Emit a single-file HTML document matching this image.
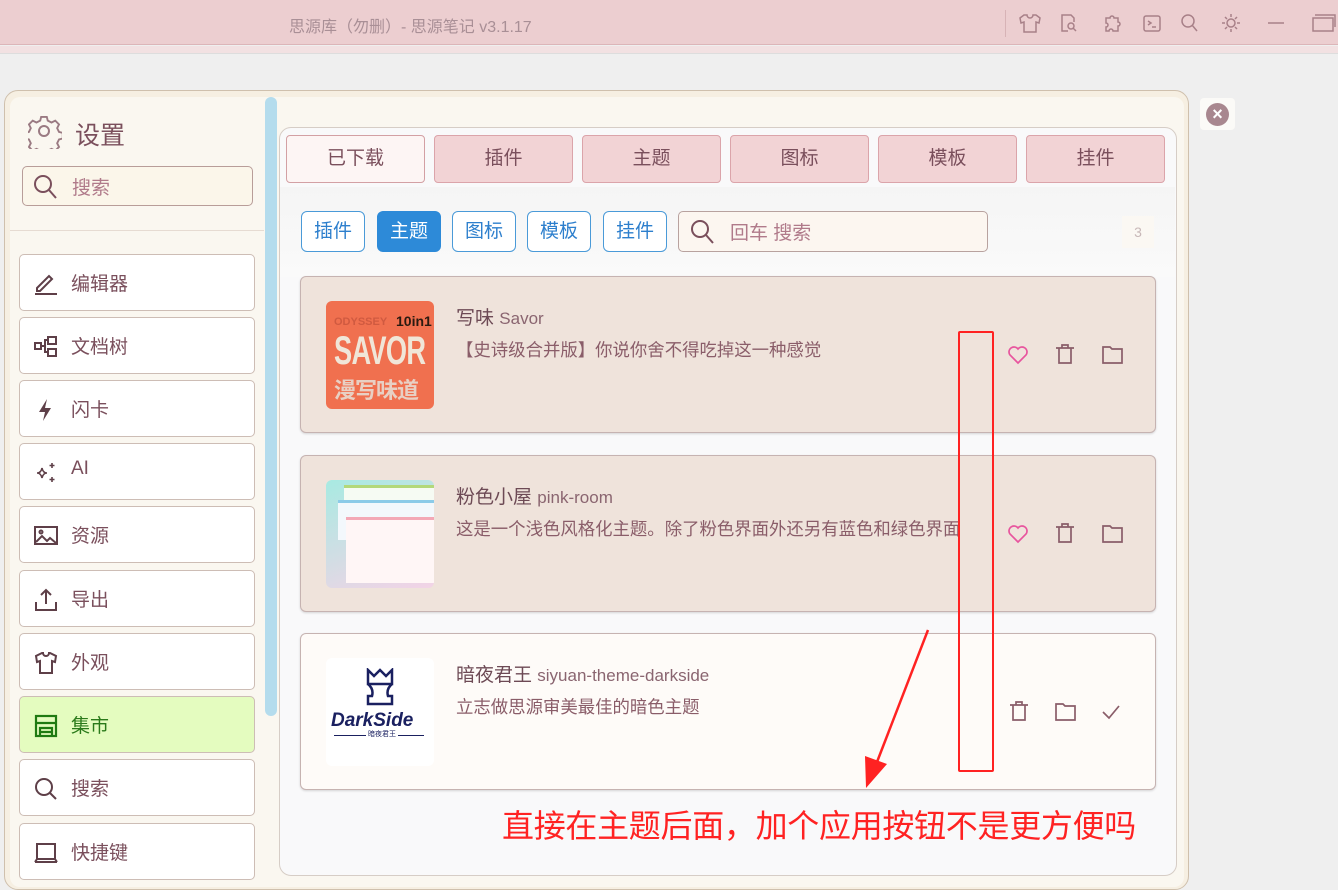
<!DOCTYPE html>
<html><head><meta charset="utf-8"><style>
*{box-sizing:border-box;margin:0;padding:0}
body{width:1338px;height:880px;overflow:hidden;background:#efefef;font-family:"Liberation Sans","Noto Sans CJK SC",sans-serif;position:relative}
.a{position:absolute}
.tb{left:0;top:0;width:1338px;height:45px;background:#ecced0;border-bottom:1px solid #dcb5b8}
.strip{left:0;top:46px;width:1338px;height:8px;background:#f2e1e2;border-bottom:1px solid #ddd}
.dlg{left:4px;top:90px;width:1185px;height:800px;background:#f6efe2;border:1px solid #cfc0ad;border-radius:14px}
.dlgi{left:10px;top:97px;width:1174px;height:790px;background:#faf7f0;border-radius:10px}
.mi{position:absolute;left:19px;width:236px;height:57px;background:#fff;border:1px solid #cdbdb5;border-radius:5px;font-size:19px;color:#7a4f5c}
.mi span{position:absolute;left:51px;top:14px}
.mi svg{position:absolute;left:14px;top:17px}
.tab{position:absolute;top:135px;width:139px;height:48px;background:#f2d3d5;border:1px solid #dba4aa;border-radius:4px;font-size:19px;color:#7a4f5c;text-align:center;line-height:46px}
.pill{position:absolute;top:211px;height:41px;border:1px solid #4a9ad8;border-radius:6px;font-size:19px;color:#2d7fcd;text-align:center;line-height:39px;background:#fff}
.card{position:absolute;left:300px;width:856px;height:157px;border:1px solid #c6b3b1;border-radius:6px;background:#efe3db;box-shadow:0 1px 2px rgba(0,0,0,.15)}
.card .t{position:absolute;left:155px;top:26px;font-size:19px;color:#6d4a55}
.card .t small{font-size:17px;color:#8a6570}
.card .d{position:absolute;left:155px;top:60px;font-size:17.4px;color:#8a5d69}
.img{position:absolute;left:25px;top:24px;width:108px;height:108px;border-radius:6px;overflow:hidden}
</style></head><body>
<div class="a tb"></div>
<div class="a" style="left:289px;top:13px;font-size:16px;color:#a98f96">思源库（勿删）- 思源笔记 v3.1.17</div>
<div class="a" style="left:1005px;top:10px;width:1px;height:27px;background:#d7b3b6"></div>
<svg class="a" style="left:1018px;top:12px" width="320" height="22" fill="none" stroke="#a88088" stroke-width="1.5">
<path d="M6 3l-4 3 1 5 3-1v10h12V10l3 1 1-5-4-3h-3a3 3 0 0 1-6 0z"/>
<path d="M48 3h-4v16h6M48 3h5l3 3v4"/><circle cx="53" cy="14" r="3"/><path d="M55 16l3 3"/>
<path d="M88 6h4a2 2 0 0 1 4 0h4v4a2 2 0 0 1 0 4v5h-5a2 2 0 0 0-4 0h-3v-4a2 2 0 0 0 0-4z"/>
<rect x="126" y="4" width="16" height="15" rx="2"/><path d="M130 9l3 2-3 2M134 15h4"/>
<circle cx="170" cy="9" r="6"/><path d="M174 13l5 6"/>
<circle cx="213" cy="11" r="4"/><path d="M213 2v3M213 17v3M204 11h3M219 11h3M207 5l2 2M217 15l2 2M219 5l-2 2M209 15l-2 2"/>
<path d="M250 11h16"/><rect x="295" y="6" width="20" height="13"/><path d="M297 3h20v12"/>
</svg>
<div class="a strip"></div>
<div class="a dlg"></div>
<div class="a dlgi"></div>
<svg class="a" style="left:28px;top:115px" width="34" height="34" fill="none" stroke="#9a7a82" stroke-width="2"><path d="M14 2h6l1 4 4 2 4-2 4 4-2 4 2 4 4 1v6l-4 1-2 4 2 4-4 4-4-2-4 2-1 4h-6l-1-4-4-2-4 2-4-4 2-4-2-4-4-1v-6l4-1 2-4-2-4 4-4 4 2 4-2z" transform="scale(.94)"/><circle cx="16" cy="16" r="5"/></svg>
<div class="a" style="left:75px;top:116px;font-size:25px;color:#7a4f5c">设置</div>
<div class="a" style="left:22px;top:166px;width:231px;height:40px;border:1px solid #b89d99;border-radius:5px;background:#fbf6ea"></div>
<svg class="a" style="left:33px;top:174px" width="26" height="26" fill="none" stroke="#7a4f5c" stroke-width="2"><circle cx="10" cy="10" r="8"/><path d="M16 16l7 8"/></svg>
<div class="a" style="left:72px;top:173px;font-size:19px;color:#b07a8a">搜索</div>
<div class="a" style="left:10px;top:230px;width:254px;height:1px;background:#e6dbd2"></div>
<div class="mi" style="top:254px"><svg width="24" height="24" fill="none" stroke="#5e3f48" stroke-width="2"><path d="M3 16L15 4l3 3L6 19H3zM1 22h22"/></svg><span>编辑器</span></div>
<div class="mi" style="top:317px"><svg width="24" height="24" fill="none" stroke="#5e3f48" stroke-width="2"><rect x="1" y="8" width="6" height="6"/><rect x="14" y="2" width="8" height="7"/><rect x="14" y="14" width="8" height="7"/><path d="M7 11h4V5h3M11 11v6h3"/></svg><span>文档树</span></div>
<div class="mi" style="top:380px"><svg width="24" height="24" fill="#5e3f48"><path d="M13 1L5 14h6l-2 9 8-13h-6z"/></svg><span>闪卡</span></div>
<div class="mi" style="top:443px"><svg width="24" height="24" fill="none" stroke="#5e3f48" stroke-width="1.6"><path d="M8 7q1 5 5 5-4 0-5 5-1-5-5-5 4 0 5-5z"/><path d="M18 2v5M15.5 4.5h5M18 16v5M15.5 18.5h5"/></svg><span>AI</span></div>
<div class="mi" style="top:506px"><svg width="24" height="24" fill="none" stroke="#5e3f48" stroke-width="2"><rect x="1" y="3" width="22" height="17"/><path d="M2 18l6-6 5 5 3-3 6 5"/><circle cx="7" cy="8" r="1.5"/></svg><span>资源</span></div>
<div class="mi" style="top:570px"><svg width="24" height="24" fill="none" stroke="#5e3f48" stroke-width="2"><path d="M2 14v8h20v-8M12 2v14M7 7l5-5 5 5"/></svg><span>导出</span></div>
<div class="mi" style="top:633px"><svg width="24" height="24" fill="none" stroke="#5e3f48" stroke-width="2"><path d="M8 2L2 5l1 6 3-1v12h12V10l3 1 1-6-6-3h-1a3 3 0 0 1-6 0z"/></svg><span>外观</span></div>
<div class="mi" style="top:696px;background:#e4fcbf"><svg width="24" height="24" fill="none" stroke="#1f7a12" stroke-width="2.2"><rect x="2" y="2" width="20" height="20"/><path d="M2 9h20M6 22v-8h12v8M6 14v4h12"/></svg><span style="color:#2a7a1a">集市</span></div>
<div class="mi" style="top:759px"><svg width="24" height="24" fill="none" stroke="#5e3f48" stroke-width="2"><circle cx="10" cy="10" r="8"/><path d="M16 16l6 6"/></svg><span>搜索</span></div>
<div class="mi" style="top:823px"><svg width="24" height="24" fill="none" stroke="#5e3f48" stroke-width="2"><rect x="3" y="3" width="18" height="15"/><path d="M1 21h22M3 18l-2 3M21 18l2 3"/></svg><span>快捷键</span></div>
<div class="a" style="left:265px;top:97px;width:12px;height:619px;background:#b4dced;border-radius:6px"></div>
<div class="a" style="left:1200px;top:98px;width:35px;height:32px;background:#fbfaf7;border-radius:4px"></div>
<div class="a" style="left:1206px;top:103px;width:23px;height:23px;border-radius:50%;background:#a8878f;color:#fff;font-size:18px;text-align:center;line-height:22px;font-weight:bold">×</div>
<div class="a" style="left:279px;top:127px;width:898px;height:749px;background:#f9f9fa;border:1px solid #d6cdc6;border-radius:12px"></div>
<div class="a" style="left:280px;top:187px;width:895px;height:90px;background:linear-gradient(#f5f5f5,#fafafa)"></div>
<div class="tab" style="left:286px;background:#fdf5f4;border-color:#d3a0a4">已下载</div>
<div class="tab" style="left:434px">插件</div>
<div class="tab" style="left:582px">主题</div>
<div class="tab" style="left:730px">图标</div>
<div class="tab" style="left:878px">模板</div>
<div class="tab" style="left:1026px">挂件</div>
<div class="pill" style="left:301px;width:64px">插件</div>
<div class="pill" style="left:377px;width:64px;background:#2d8ad8;border-color:#2d8ad8;color:#fff">主题</div>
<div class="pill" style="left:452px;width:64px">图标</div>
<div class="pill" style="left:527px;width:64px">模板</div>
<div class="pill" style="left:603px;width:64px">挂件</div>
<div class="a" style="left:678px;top:211px;width:310px;height:41px;border:1px solid #b8a29f;border-radius:5px;background:#fcf6f0"></div>
<svg class="a" style="left:690px;top:219px" width="26" height="26" fill="none" stroke="#7a4f5c" stroke-width="2"><circle cx="10" cy="10" r="8"/><path d="M16 16l7 8"/></svg>
<div class="a" style="left:730px;top:218px;font-size:19px;color:#b07a8a">回车 搜索</div>
<div class="a" style="left:1122px;top:216px;width:32px;height:32px;background:#fbf8f3;color:#c8b8b8;font-size:14px;text-align:center;line-height:32px">3</div>
<div class="card" style="top:276px">
<div class="img" style="background:#f0704f">
<div class="a" style="left:8px;top:15px;font-size:11px;font-weight:bold;color:#d05a40">ODYSSEY</div>
<div class="a" style="left:70px;top:12px;font-size:14px;font-weight:bold;color:#2a1a10">10in1</div>
<div class="a" style="left:8px;top:28px;font-size:40px;font-weight:bold;color:#f0e6d8;transform:scaleX(.68);transform-origin:left;letter-spacing:-1px">SAVOR</div>
<div class="a" style="left:8px;top:72px;font-size:22px;font-weight:bold;color:#e8d0c4;letter-spacing:-1px">漫写味道</div>
</div>
<div class="t">写味 <small>Savor</small></div><div class="d">【史诗级合并版】你说你舍不得吃掉这一种感觉</div>
</div>
<div class="card" style="top:455px">
<div class="img" style="background:linear-gradient(160deg,#a8eae2,#f3d3e6)">
<div class="a" style="left:18px;top:5px;width:90px;height:40px;background:#f6fbf3;border-top:3px solid #b3d87a"></div>
<div class="a" style="left:12px;top:20px;width:96px;height:40px;background:#f3f8fc;border-top:3px solid #8ccbe8"></div>
<div class="a" style="left:20px;top:37px;width:88px;height:66px;background:#fff6f6;border-top:3px solid #f3a8b6"></div>
</div>
<div class="t">粉色小屋 <small>pink-room</small></div><div class="d">这是一个浅色风格化主题。除了粉色界面外还另有蓝色和绿色界面</div>
</div>
<div class="card" style="top:633px;background:#fefbf8">
<div class="img" style="background:#fff">
<svg class="a" style="left:34px;top:10px" width="40" height="40" fill="none" stroke="#1a2060" stroke-width="2.5"><path d="M8 2l6 6 6-6 6 6 6-6v14H8zM8 16q6 5 4 12h-4v8h24v-8h-4q-2-7 4-12"/></svg>
<div class="a" style="left:5px;top:52px;font-size:19px;font-weight:bold;font-style:italic;color:#1a2060">DarkSide</div>
<div class="a" style="left:8px;top:77px;width:90px;height:1px;background:#1a2060"></div>
<div class="a" style="left:40px;top:71px;font-size:7px;color:#1a2060;background:#fff;padding:0 2px">暗夜君王</div>
</div>
<div class="t">暗夜君王 <small>siyuan-theme-darkside</small></div><div class="d">立志做思源审美最佳的暗色主题</div>
</div>
<svg class="a" style="left:1006px;top:342px" width="130" height="24" fill="none" stroke-width="1.7">
<path stroke="#e8559e" d="M12 21l-8-8a5 5 0 0 1 8-6 5 5 0 0 1 8 6z"/>
<g stroke="#8a5d69"><path d="M50 6h18M53 6v15h12V6M56 6V3h6v3"/><path d="M97 5h7l2 2h10v14H97z"/></g></svg>
<svg class="a" style="left:1006px;top:521px" width="130" height="24" fill="none" stroke-width="1.7">
<path stroke="#e8559e" d="M12 21l-8-8a5 5 0 0 1 8-6 5 5 0 0 1 8 6z"/>
<g stroke="#8a5d69"><path d="M50 6h18M53 6v15h12V6M56 6V3h6v3"/><path d="M97 5h7l2 2h10v14H97z"/></g></svg>
<svg class="a" style="left:1006px;top:699px" width="130" height="24" fill="none" stroke-width="1.7" stroke="#8a5d69">
<path d="M4 6h18M7 6v15h12V6M10 6V3h6v3"/><path d="M50 5h7l2 2h10v14H50z"/><path d="M97 13l6 6 10-12"/></svg>
<div class="a" style="left:958px;top:331px;width:36px;height:441px;border:2.5px solid #f22;border-radius:2px"></div>
<svg class="a" style="left:850px;top:620px" width="90" height="180"><path d="M78 10L27 142" stroke="#f22" stroke-width="2.5"/><path d="M16 168l-1-32 22 8z" fill="#f22"/></svg>
<div class="a" style="left:502px;top:801px;font-size:32px;color:#f22;letter-spacing:-0.3px;white-space:nowrap">直接在主题后面，加个应用按钮不是更方便吗</div>
</body></html>
